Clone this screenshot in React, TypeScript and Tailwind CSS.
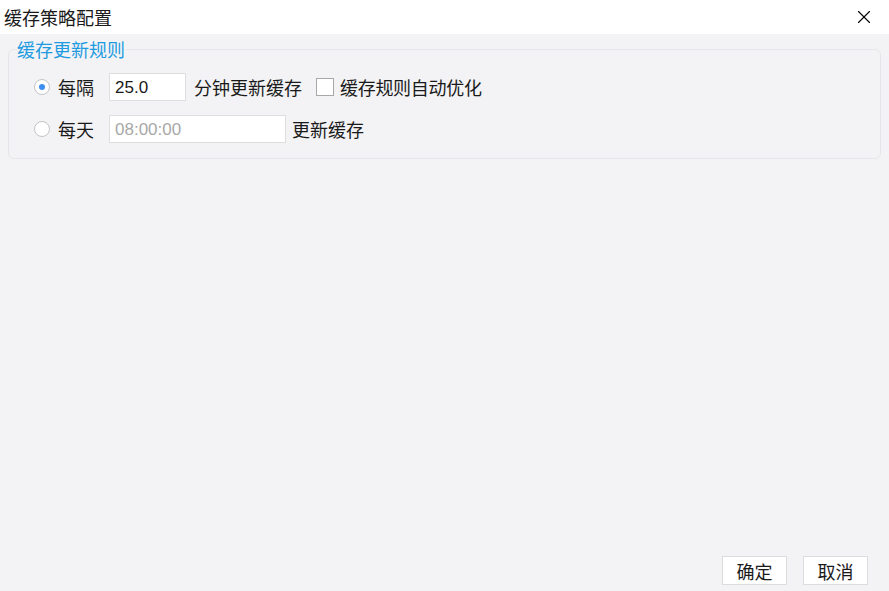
import { X } from "lucide-react";

const FONT = "font-['Microsoft_YaHei','Noto_Sans_CJK_SC',sans-serif]";

function Radio({ checked }: { checked?: boolean }) {
    return (
        <span className="w-[16px] h-[16px] rounded-full border border-[#c4c4c4] bg-white flex items-center justify-center shrink-0">
            {checked && <span className="w-[6px] h-[6px] rounded-full bg-[#3d8ef0]"></span>}
        </span>
    );
}

export default function App() {
    return (
        <div className={`w-[889px] h-[591px] flex flex-col bg-[#f3f3f5] text-[#1a1a1a] ${FONT}`}>
            <div className="h-[34px] bg-white flex items-center justify-between pl-[4px] pr-[14px]">
                <span className="text-[18px] leading-none">缓存策略配置</span>
                <X size={22} strokeWidth={1.2} className="text-black" />
            </div>
            <div className="flex-1 flex flex-col px-[8px] pt-[15px]">
                <div className="relative h-[110px] border border-[#e6e6ea] rounded-[6px] flex flex-col gap-[14px] pl-[25px] pt-[23px]">
                    <span className="absolute left-[8px] top-[-11px] bg-[#f3f3f5] text-[#1e9be0] text-[18px] leading-[20px]">缓存更新规则</span>
                    <div className="flex items-center h-[28px]">
                        <Radio checked />
                        <span className="text-[18px] ml-[8px] w-[51px]">每隔</span>
                        <span className="w-[77px] h-[28px] bg-white border border-[#dedede] flex items-center pl-[5px] pt-[1px] text-[17px] font-['Liberation_Sans',sans-serif]">25.0</span>
                        <span className="text-[18px] ml-[8px]">分钟更新缓存</span>
                        <span className="w-[18px] h-[18px] border border-[#a8a8a8] bg-white ml-[14px]"></span>
                        <span className="text-[18px] ml-[6px] tracking-[-0.3px]">缓存规则自动优化</span>
                    </div>
                    <div className="flex items-center h-[28px]">
                        <Radio />
                        <span className="text-[18px] ml-[8px] w-[51px]">每天</span>
                        <span className="w-[177px] h-[28px] bg-white border border-[#dedede] flex items-center pl-[5px] pt-[1px] text-[17px] text-[#a8a8a8] font-['Liberation_Sans',sans-serif]">08:00:00</span>
                        <span className="text-[18px] ml-[6px]">更新缓存</span>
                    </div>
                </div>
                <div className="flex-1"></div>
                <div className="flex justify-end gap-[16px] pr-[13px] pb-[6px]">
                    <button className="w-[65px] h-[29px] bg-white border border-[#dcdcdc] text-[18px] leading-none">确定</button>
                    <button className="w-[65px] h-[29px] bg-white border border-[#dcdcdc] text-[18px] leading-none">取消</button>
                </div>
            </div>
        </div>
    );
}
